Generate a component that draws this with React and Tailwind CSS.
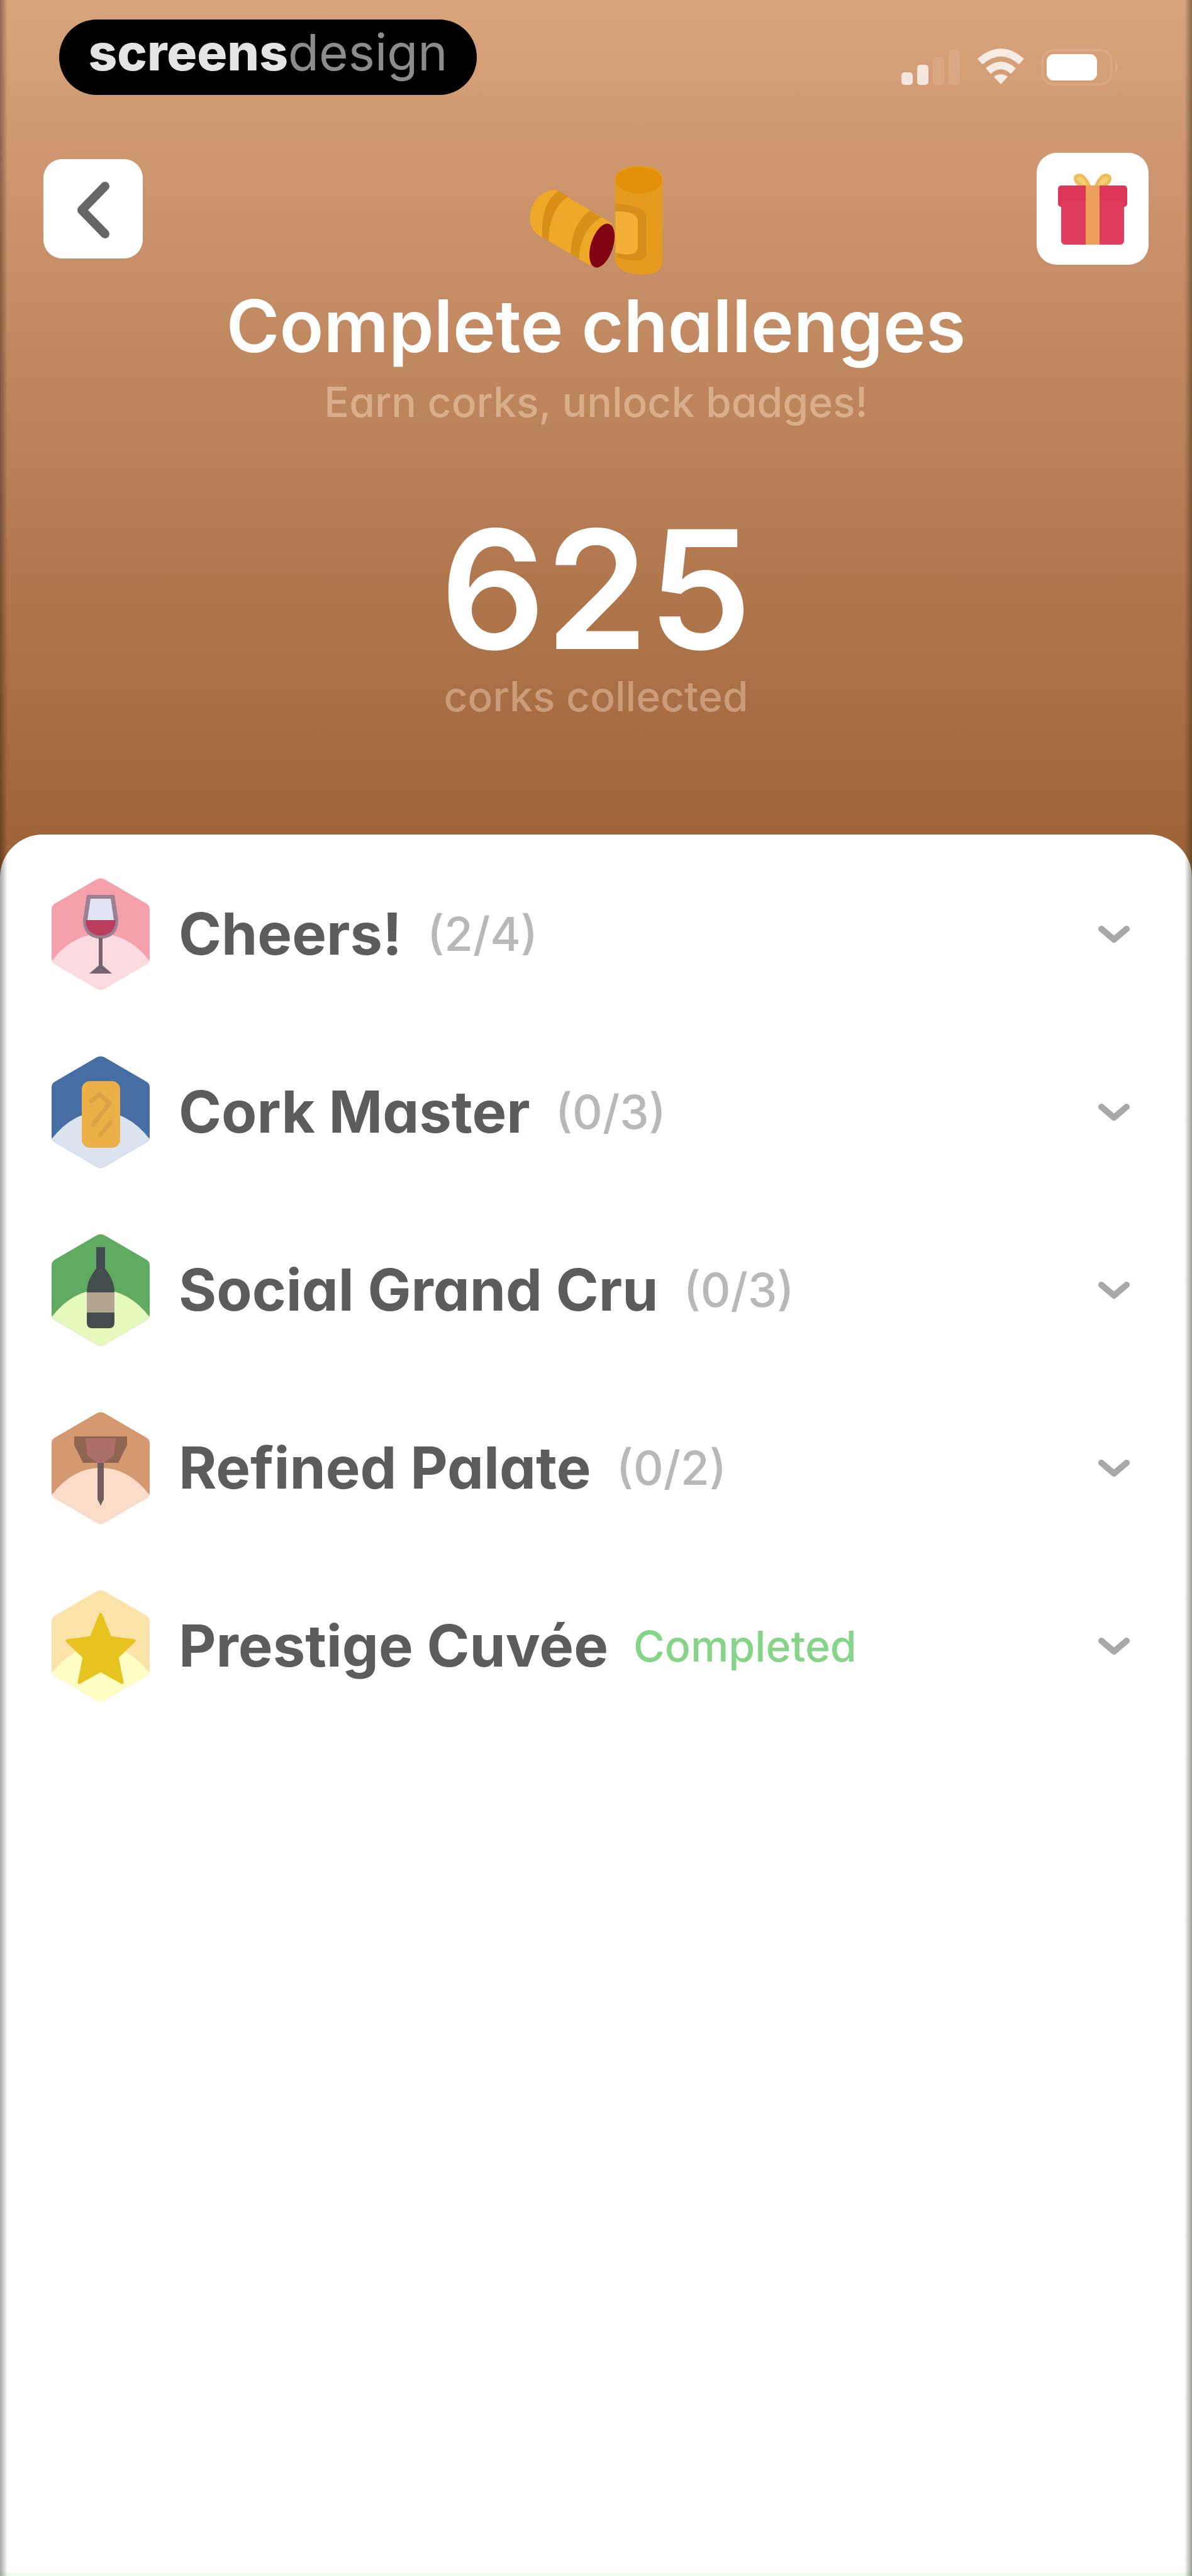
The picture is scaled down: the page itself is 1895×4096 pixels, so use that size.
import React, { useState } from 'react';

const STAR = '80,42 95,79 133,84 106,110 114,150 80,131 46,150 54,110 27,84 65,79';

const Hexagon = ({ id, top, bottom, children }) => (
  <svg viewBox="0 0 160 184" className="w-[160px] h-[184px] shrink-0" aria-hidden="true">
    <clipPath id={id}>
      <path d="M74 5 Q80 2 86 5 L153 44 Q158 47 158 53 V131 Q158 137 153 140 L86 179 Q80 182 74 179 L7 140 Q2 137 2 131 V53 Q2 47 7 44 Z" />
    </clipPath>
    <g clipPath={`url(#${id})`}>
      <rect width="160" height="184" fill={top} />
      <path d="M0 138 Q34 92 80 92 Q126 92 160 138 V184 H0 Z" fill={bottom} />
      {children}
    </g>
  </svg>
);

const CheersBadge = () => (
  <Hexagon id="hex-cheers" top="#f4a1ab" bottom="#fcdbe0">
    <path d="M58 30 H102 L108 70 Q108 98 80 100 Q52 98 52 70 Z" fill="#9b8092" />
    <path d="M64 36 H96 L101 70 H59 Z" fill="#dfe3f2" />
    <path d="M56 70 H104 Q103 93 80 95 Q57 93 56 70 Z" fill="#bb3f5c" />
    <path d="M77 98 H83 V142 L98 155 H62 L77 142 Z" fill="#75646c" />
  </Hexagon>
);

const CorkBadge = () => (
  <Hexagon id="hex-cork" top="#466ea3" bottom="#dbe3ef">
    <rect x="50" y="43" width="61" height="106" rx="13" fill="#edb048" />
    <path d="M65 75 L78 64 L94 78 L68 112 M96 108 L80 128" fill="none" stroke="#dfa044" strokeWidth="7" strokeLinecap="round" strokeLinejoin="round" />
  </Hexagon>
);

const BottleBadge = () => (
  <Hexagon id="hex-bottle" top="#60ab62" bottom="#e6fabd">
    <path d="M73 24 H87 V58 Q102 76 102 96 V144 Q102 153 93 153 H67 Q58 153 58 144 V96 Q58 76 73 58 Z" fill="#444d4d" />
    <rect x="58" y="96" width="44" height="32" fill="#b3a490" />
  </Hexagon>
);

const CorkscrewBadge = () => (
  <Hexagon id="hex-screw" top="#d4996f" bottom="#fbdcc8">
    <path d="M38 42 H122 V56 L108 84 H52 L38 56 Z" fill="#8d6550" />
    <path d="M56 45 H104 L101 72 L80 88 L59 72 Z" fill="#ad7068" />
    <path d="M75 84 H85 V142 L80 152 L75 142 Z" fill="#6f5f58" />
  </Hexagon>
);

const StarBadge = () => (
  <Hexagon id="hex-star" top="#fbe2a8" bottom="#fdfdc4">
    <polygon points={STAR} fill="#e6c31f" stroke="#e6c31f" strokeWidth="5" strokeLinejoin="round" />
  </Hexagon>
);

const Corks = () => (
  <svg viewBox="235 125 735 600" className="w-[215px] h-[176px]" aria-hidden="true">
    <path d="M380 255 L690 440 L570 668 L285 500 Q235 460 245 385 Q270 270 380 255 Z" fill="#efa928" />
    <path d="M400 262 Q300 330 310 515 L345 535 Q345 370 450 292 Z" fill="#d98e18" />
    <path d="M570 370 Q470 440 465 605 L510 632 Q515 480 630 405 Z" fill="#d59118" />
    <ellipse cx="635" cy="560" rx="60" ry="124" transform="rotate(18 635 560)" fill="#800512" />
    <path d="M705 200 Q710 128 835 128 Q965 128 965 200 V650 Q960 718 850 718 Q720 710 705 640 Z" fill="#e79b1e" />
    <ellipse cx="835" cy="205" rx="126" ry="72" fill="#e28f0a" />
    <path d="M708 330 Q875 345 875 400 V610 Q870 665 715 625 Z" fill="#d38f19" />
    <path d="M708 375 Q830 370 830 430 V570 Q825 625 710 600 Z" fill="#f4af36" />
  </svg>
);

const Gift = () => (
  <svg viewBox="0 0 178 178" className="w-full h-full" aria-hidden="true">
    <path d="M86 58 Q58 50 62 38 Q74 28 86 58 Z M92 58 Q120 50 116 38 Q104 28 92 58 Z" fill="#f5cf73" stroke="#efbc5c" strokeWidth="5" />
    <rect x="34" y="52" width="110" height="34" rx="5" fill="#dc3659" />
    <rect x="39" y="76" width="100" height="70" rx="6" fill="#e03d5e" />
    <rect x="78" y="52" width="22" height="94" fill="#eb9f5b" />
  </svg>
);

const StatusIcons = () => (
  <div className="flex items-center gap-[26px] pt-11">
    <svg viewBox="0 0 94 64" className="w-[94px] h-[64px]" fill="#fff" aria-hidden="true">
      <rect x="0" y="40" width="18" height="20" rx="5" fillOpacity="0.75" />
      <rect x="25" y="28" width="18" height="32" rx="5" fillOpacity="0.75" />
      <rect x="50" y="16" width="18" height="44" rx="5" fillOpacity="0.1" />
      <rect x="75" y="4" width="18" height="56" rx="5" fillOpacity="0.1" />
    </svg>
    <svg viewBox="0 0 76 60" className="w-[76px] h-[60px]" fill="none" stroke="#fff" strokeOpacity="0.8" strokeWidth="12" aria-hidden="true">
      <path d="M5 21 Q38 -8 71 21" />
      <path d="M18 36 Q38 18 58 36" />
      <path d="M38 57 L27 45 Q38 37 49 45 Z" fill="#fff" stroke="none" fillOpacity="0.8" />
    </svg>
    <svg viewBox="0 0 128 60" className="w-[128px] h-[60px]" aria-hidden="true">
      <rect x="2" y="3" width="110" height="54" rx="18" fill="none" stroke="#fff" strokeOpacity="0.12" strokeWidth="4" />
      <rect x="9" y="9" width="80" height="42" rx="11" fill="#fff" />
      <path d="M118 21 Q126 30 118 39 Z" fill="#fff" fillOpacity="0.15" />
    </svg>
  </div>
);

const challenges = [
  { id: 'cheers', title: 'Cheers!', status: '(2/4)', Badge: CheersBadge },
  { id: 'cork', title: 'Cork Master', status: '(0/3)', Badge: CorkBadge },
  { id: 'social', title: 'Social Grand Cru', status: '(0/3)', Badge: BottleBadge },
  { id: 'palate', title: 'Refined Palate', status: '(0/2)', Badge: CorkscrewBadge },
  { id: 'cuvee', title: 'Prestige Cuvée', status: 'Completed', done: true, Badge: StarBadge },
];

const ChallengeRow = ({ challenge, open, onToggle }) => {
  const { title, status, done, Badge } = challenge;

  return (
    <li>
      <button
        type="button"
        onClick={onToggle}
        aria-expanded={open}
        className="flex w-full h-[283px] items-center pl-20 pr-[96px] text-left"
      >
        <Badge />
        <span className="ml-[44px] text-[92px] leading-[112px] font-bold text-[#5c5c5c]">{title}</span>
        {done ? (
          <span className="ml-10 text-[68px] leading-[80px] font-medium text-[#86d488]">{status}</span>
        ) : (
          <span className="ml-10 text-[74px] leading-[80px] font-medium text-[#b8b8b8]">{status}</span>
        )}
        <svg viewBox="0 0 56 36" className="ml-auto w-[56px] h-[36px]" fill="none" stroke="#a8a8a8" strokeWidth="10" strokeLinecap="round" strokeLinejoin="round" aria-hidden="true">
          <path d="M8 10 L28 27 L48 10" />
        </svg>
      </button>
    </li>
  );
};

function App() {
  const [openId, setOpenId] = useState(null);

  return (
    <div className="relative flex min-h-screen flex-col bg-white font-['Inter','Open_Sans',sans-serif] [font-feature-settings:'cv11']">
      <header className="bg-linear-to-b from-[#d9a37c] to-[#9c6236] pb-[248px] text-center text-white">
        <div className="flex items-start justify-between pl-[94px] pr-[112px] pt-[31px]">
          <div className="flex h-[120px] w-[664px] items-center justify-center rounded-full bg-black pb-4 text-[80px] leading-[100px]">
            <span className="font-extrabold text-[#e4e4e4]">screens</span>
            <span className="text-[#8c8c8c]">design</span>
          </div>
          <StatusIcons />
        </div>

        <div className="mt-[92px] grid grid-cols-3 items-start px-[69px]">
          <button type="button" aria-label="Back" className="mt-[10px] h-[158px] w-[158px] rounded-[30px] bg-white">
            <svg viewBox="0 0 158 158" fill="none" stroke="#666666" strokeWidth="14" strokeLinecap="round" strokeLinejoin="round" aria-hidden="true">
              <path d="M98 43 L61 81 L98 119" />
            </svg>
          </button>
          <div className="mt-5 justify-self-center">
            <Corks />
          </div>
          <button type="button" aria-label="Rewards" className="h-[178px] w-[178px] justify-self-end rounded-[32px] bg-white">
            <Gift />
          </button>
        </div>

        <h1 className="mt-5 text-[115px] leading-[120px] font-semibold">Complete challenges</h1>
        <p className="mt-5 text-[66px] leading-[80px] font-medium text-[#d8ae8b]">Earn corks, unlock badges!</p>
        <p className="mt-32 text-[262px] leading-[260px] font-semibold">625</p>
        <p className="text-[66px] leading-[80px] font-medium text-[#cb9c79]">corks collected</p>
      </header>

      <main className="-mt-[68px] flex-1 rounded-t-[68px] bg-white pt-4">
        <ul>
          {challenges.map((challenge) => (
            <ChallengeRow
              key={challenge.id}
              challenge={challenge}
              open={openId === challenge.id}
              onToggle={() => setOpenId(openId === challenge.id ? null : challenge.id)}
            />
          ))}
        </ul>
      </main>
      <div className="h-[6px] bg-[#effcec]" />

      {/* soft screen edges */}
      <div className="pointer-events-none absolute inset-y-0 left-0 w-3 bg-linear-to-r from-black/35 to-transparent" />
      <div className="pointer-events-none absolute inset-y-0 right-0 w-3 bg-linear-to-l from-[#202810]/45 to-transparent" />
    </div>
  );
}

export default App;
